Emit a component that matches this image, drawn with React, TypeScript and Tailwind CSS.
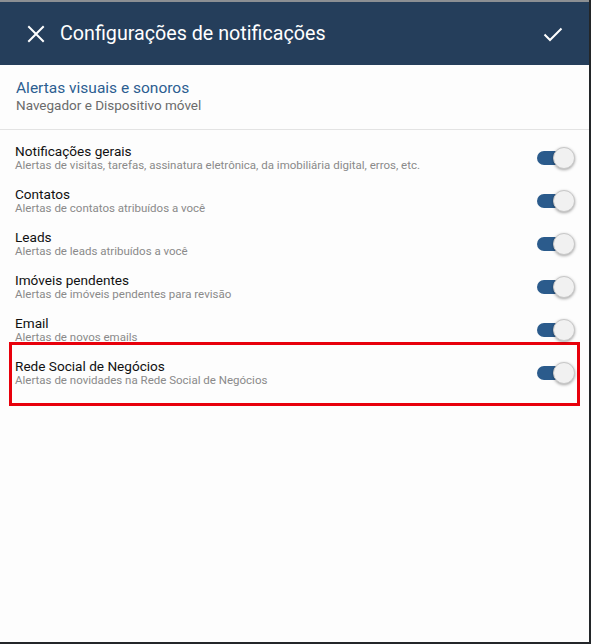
import React, { useState } from 'react';

const items = [
  { title: 'Notificações gerais', sub: 'Alertas de visitas, tarefas, assinatura eletrônica, da imobiliária digital, erros, etc.' },
  { title: 'Contatos', sub: 'Alertas de contatos atribuídos a você' },
  { title: 'Leads', sub: 'Alertas de leads atribuídos a você' },
  { title: 'Imóveis pendentes', sub: 'Alertas de imóveis pendentes para revisão' },
  { title: 'Email', sub: 'Alertas de novos emails' },
];

function Toggle({ on, onClick }: { on: boolean; onClick: () => void }) {
  return (
    <button onClick={onClick} className="relative w-[38px] h-[24px] flex items-center shrink-0">
      <span className={`absolute left-0 w-[28px] h-[14px] rounded-full ${on ? 'bg-[#2b5b8c]' : 'bg-[#bdbdbd]'}`} />
      <span
        className={`absolute w-[22px] h-[22px] rounded-full bg-[#f1f1f1] border border-[#c8c8c8] shadow-[0_1px_3px_rgba(0,0,0,0.35)] ${
          on ? 'right-0' : 'left-[-6px]'
        }`}
      />
    </button>
  );
}

function Row({ title, sub }: { title: string; sub: string }) {
  const [on, setOn] = useState(true);
  return (
    <div className="h-[43px] flex items-center justify-between pl-[15px] pr-[14px]">
      <div className="flex flex-col">
        <span className="text-[13.6px] leading-[15px] text-[#111]">{title}</span>
        <span className="text-[11.5px] leading-[13px] text-[#8a8a8a]">{sub}</span>
      </div>
      <Toggle on={on} onClick={() => setOn(!on)} />
    </div>
  );
}

export default function App() {
  return (
    <div
      className="w-[591px] h-[644px] bg-[#fdfdfd] border-r-2 border-b-2 border-[#232629] flex flex-col"
      style={{ fontFamily: 'Roboto, "Liberation Sans", sans-serif' }}
    >
      <div className="h-[2px] bg-[#8c8f93]" />
      <header className="h-[63px] bg-[#253e5b] flex items-center pl-[27px] pr-[26px] text-white">
        <svg width="18" height="18" viewBox="0 0 18 18" className="shrink-0">
          <path d="M2 2 L16 16 M16 2 L2 16" stroke="white" strokeWidth="2" strokeLinecap="square" />
        </svg>
        <h1 className="ml-[15px] text-[19.7px] leading-none flex-1">Configurações de notificações</h1>
        <svg width="20" height="16" viewBox="0 0 20 16" className="shrink-0">
          <path d="M1.5 8.5 L7 14 L18.5 2.5" stroke="white" strokeWidth="2" fill="none" />
        </svg>
      </header>

      <div className="pl-[16px] pt-[15px] pb-[16px] border-b border-[#e3e3e3]">
        <div className="text-[15.5px] leading-[17px] text-[#2c5e91]">Alertas visuais e sonoros</div>
        <div className="text-[13.5px] leading-[16px] text-[#6b6b6b]">Navegador e Dispositivo móvel</div>
      </div>

      <div className="pt-[6px]">
        {items.map((it) => (
          <Row key={it.title} title={it.title} sub={it.sub} />
        ))}
        <div className="mx-[9px] -mt-[9px] pt-[6px] pb-[9px] border-[3px] border-[#e8000b]">
          <div className="-mx-[12px]">
            <Row title="Rede Social de Negócios" sub="Alertas de novidades na Rede Social de Negócios" />
          </div>
        </div>
      </div>
    </div>
  );
}
